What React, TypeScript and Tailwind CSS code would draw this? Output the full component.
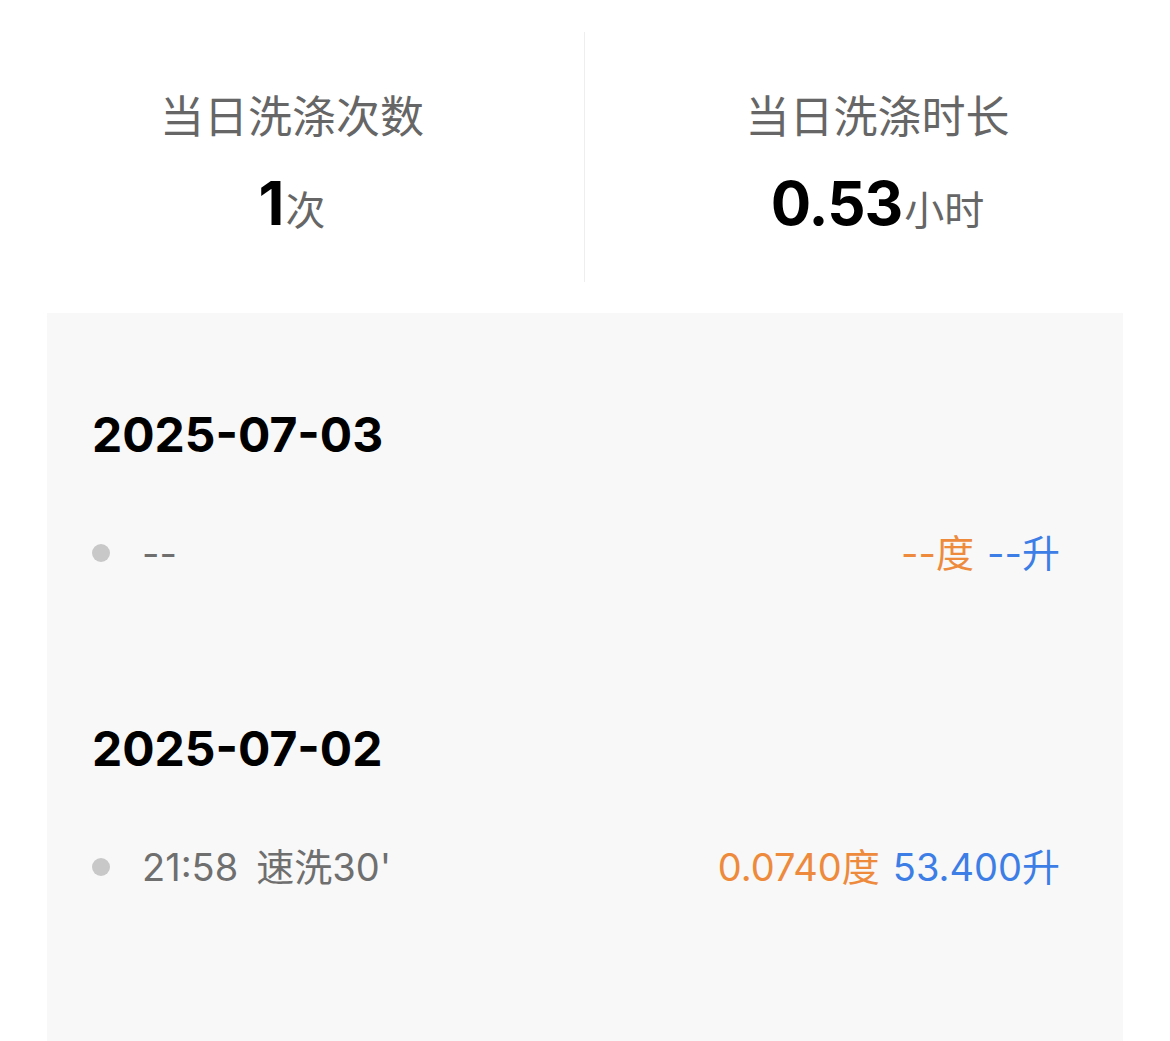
const font = "font-['Inter','Noto_Sans_CJK_SC',sans-serif]";

const stats = [
  { label: "当日洗涤次数", value: "1", unit: "次" },
  { label: "当日洗涤时长", value: "0.53", unit: "小时" },
];

const days = [
  { date: "2025-07-03", time: "--", mode: "", power: "--", water: "--" },
  { date: "2025-07-02", time: "21:58", mode: "速洗30'", power: "0.0740", water: "53.400" },
];

function Stat({ label, value, unit, divider }: { label: string; value: string; unit: string; divider?: boolean }) {
  return (
    <div className={`flex h-[250px] flex-col items-center pt-[63px] ${divider ? "border-r border-[#eeeeee]" : ""}`}>
      <div className="text-[44px] leading-[44px] text-[#666666]">{label}</div>
      <div className="mt-[34px] flex items-baseline">
        <span className="text-[60px] font-bold leading-[60px] tracking-[-1px] text-black">{value}</span>
        <span className="ml-[2px] text-[40px] leading-[40px] text-[#666666]">{unit}</span>
      </div>
    </div>
  );
}

export default function App() {
  return (
    <div className={`h-[1041px] w-[1170px] overflow-hidden bg-white ${font}`}>
      <div className="grid grid-cols-2 pt-[32px]">
        {stats.map((s, i) => (
          <Stat key={s.label} {...s} divider={i === 0} />
        ))}
      </div>

      <div className="mx-[47px] mt-[31px] h-[800px] bg-[#f8f8f8] pl-[45px] pr-[63px] pt-[97px]">
        {days.map((d, i) => (
          <div key={d.date} className={i > 0 ? "mt-[152px]" : ""}>
            <div className="text-[48px] font-bold leading-[50px] text-black">{d.date}</div>
            <div className="mt-[74px] flex items-center justify-between text-[38px] leading-[38px]">
              <div className="flex items-center gap-[32px]">
                <span className="h-[18px] w-[18px] rounded-full bg-[#c8c8c8]" />
                <span className="flex gap-[18px] text-[#6f6f6f]">
                  <span>{d.time}</span>
                  {d.mode && <span>{d.mode}</span>}
                </span>
              </div>
              <div className="flex gap-[13px]">
                <span className="text-[#ee8a3c]">{d.power}度</span>
                <span className="text-[#3d7ee6]">{d.water}升</span>
              </div>
            </div>
          </div>
        ))}
      </div>
    </div>
  );
}
